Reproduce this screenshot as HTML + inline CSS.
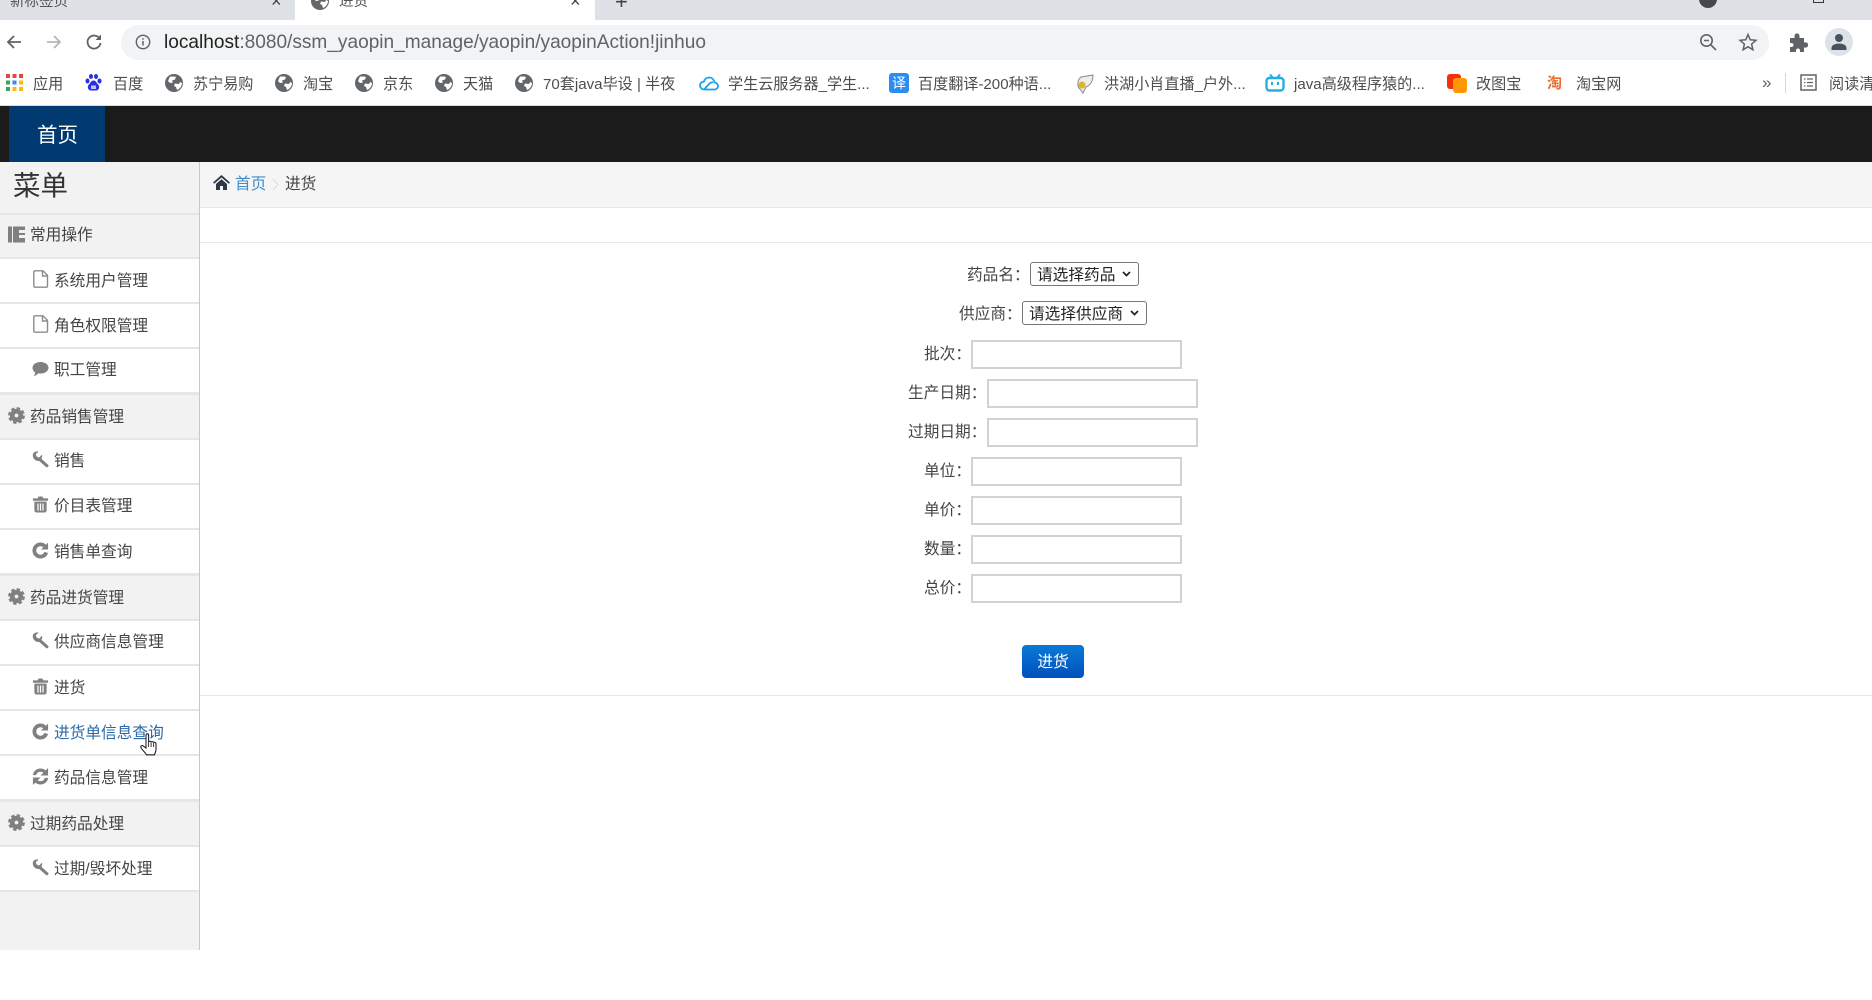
<!DOCTYPE html>
<html lang="zh-CN"><head><meta charset="utf-8"><title>进货</title>
<style>
html,body{margin:0;padding:0;width:1872px;height:1000px;overflow:hidden;background:#fff}
body{position:relative;font-family:"Liberation Sans","Noto Sans CJK SC",sans-serif;color:#444;font-size:15.7px}
.a{position:absolute}
.t{position:absolute;line-height:24px;height:24px;white-space:nowrap;margin-top:1px}
.bm{font-size:15.1px;color:#4b4d50;top:72px}
.sec{left:30px}
.it{left:54px}
.lb{color:#444}
svg{position:absolute;overflow:visible}
input{position:absolute;box-sizing:border-box;width:211px;height:29px;border:2px solid #d2d2d2;background:#fff;margin:0;padding:0}
select{position:absolute;box-sizing:border-box;height:24px;margin:0;padding:2px 0 0 6px;-webkit-appearance:none;appearance:none;font:15.7px "Liberation Sans","Noto Sans CJK SC",sans-serif;color:#222;background:#fff;border:1px solid #767676;border-radius:3px}
.ln{position:absolute;left:0;width:199px;height:2px;background:#e6e6e6}
</style></head><body>
<svg width="0" height="0" style="position:absolute">
<defs>
<symbol id="globe" viewBox="0 0 18 18"><circle cx="9" cy="9" r="9" fill="#63666a"/><path d="M5 2.500C7 3 9 2 11 3l-1 2.500-3 1 1 2-3 .5-2-2zM10 9.500l4 .5 1-2 2 1c0 3-2 6-5 7l-1-3-2-1z" fill="#fff"/></symbol>
<symbol id="gear" viewBox="0 0 18 18"><circle cx="9" cy="9" r="4.500" fill="none" stroke="#808080" stroke-width="5"/><circle cx="9" cy="9" r="7.400" fill="none" stroke="#808080" stroke-width="3" stroke-dasharray="3.500 2.300"/></symbol>
<symbol id="wrench" viewBox="0 0 18 18"><path d="M.8 4.500C.8 1.500 4 -.2 7 .5L4 3.500 5 6l2.500 1L10.500 4c.6 1.500.3 3-.6 4.200l7.300 6.500c1.100 1.100-1 3.400-2.300 2.300L7.500 10.500C4.500 11 .8 8.500.8 4.500z" fill="#808080"/></symbol>
<symbol id="trash" viewBox="0 0 18 18"><path d="M6 2.500 7 .5h4l1 2h5v2.500H1V2.500zM2.500 6h13v9c0 1.500-1 2.500-2.500 2.500H5c-1.500 0-2.500-1-2.500-2.500zM5.700 8v7.500h1.300V8zM8.350 8v7.500h1.300V8zM11 8v7.500h1.300V8z" fill="#808080" fill-rule="evenodd"/></symbol>
<symbol id="redo" viewBox="0 0 18 18"><path d="M9 .5c2.300 0 4.400.9 5.900 2.400L17 .5V8H9.500l2.400-2.400C11.200 4.900 10.100 4.500 9 4.500a4.500 4.500 0 1 0 4.200 6l3.800 1.200C15.900 15.300 12.800 17.500 9 17.500 4.300 17.500.5 13.700.5 9S4.300.5 9 .5z" fill="#808080"/></symbol>
<symbol id="sync" viewBox="0 0 18 18"><path d="M.8 7.500C1.800 3 5 .5 9 .5c2.200 0 4 .8 5.400 2L17 0V8H9l3-3C11.300 4.400 10.300 4 9 4 6.800 4 5.200 5.200 4.400 7.500zM17.200 10.500C16.200 15 13 17.500 9 17.500c-2.200 0-4-.8-5.400-2L1 18v-8h8l-3 3c.7.600 1.700 1 3 1 2.200 0 3.800-1.200 4.600-3.500z" fill="#808080"/></symbol>
<symbol id="file" viewBox="0 0 16 18"><path d="M2 .8h8l4.500 4.500V16c0 .7-.5 1.200-1.200 1.200H2c-.7 0-1.200-.5-1.200-1.200V2C.8 1.300 1.300.8 2 .8zM9.500 1v5h5" fill="none" stroke="#8c8c8c" stroke-width="1.400"/></symbol>
</defs></svg>

<!-- tab strip -->
<div class="a" style="left:0;top:0;width:1872px;height:20px;background:#dee1e6"></div>
<div class="a" style="left:295px;top:-10px;width:300px;height:30px;background:#fff;border-radius:10px 10px 0 0"></div>
<div class="a" style="left:0;top:0;width:1872px;height:20px;overflow:hidden">
<div class="t" style="left:10px;top:-11px;font-size:14.500px;color:#555">新标签页</div>
<div class="t" style="left:339px;top:-11px;font-size:14.500px;color:#555">进货</div>
<div class="t" style="left:271px;top:-12px;font-size:18px;color:#444">×</div>
<div class="t" style="left:570px;top:-12px;font-size:18px;color:#444">×</div>
<div class="t" style="left:615px;top:-11px;font-size:22px;color:#444">+</div>
<svg style="left:311px;top:-8px" width="18" height="18"><use href="#globe"/></svg>
<div class="a" style="left:1699px;top:-10px;width:18px;height:18px;border-radius:50%;background:#45484c"></div>
<div class="a" style="left:1813px;top:-8px;width:9px;height:9px;border:1.500px solid #333"></div>
</div>

<!-- toolbar -->
<svg style="left:5px;top:33px" width="18" height="18" viewBox="0 0 18 18"><path d="M16 9H3M9 3 3 9l6 6" fill="none" stroke="#5f6368" stroke-width="1.800"/></svg>
<svg style="left:45px;top:33px" width="18" height="18" viewBox="0 0 18 18"><path d="M2 9h13M9 3l6 6-6 6" fill="none" stroke="#b4b7ba" stroke-width="1.800"/></svg>
<svg style="left:85px;top:33px" width="18" height="18" viewBox="0 0 18 18"><path d="M14.800 6A6.500 6.500 0 1 0 15.500 10" fill="none" stroke="#5f6368" stroke-width="1.800"/><path d="M16 1.500V7h-5.500z" fill="#5f6368"/></svg>
<div class="a" style="left:121px;top:25px;width:1648px;height:35px;background:#f1f3f4;border-radius:18px"></div>
<svg style="left:135px;top:34px" width="16" height="16" viewBox="0 0 16 16"><circle cx="8" cy="8" r="6.700" fill="none" stroke="#5f6368" stroke-width="1.400"/><path d="M8 7v4.500M8 4.300v1.500" stroke="#5f6368" stroke-width="1.500"/></svg>
<div class="t" style="left:164px;top:30px;font-size:19.080px;color:#222">localhost<span style="color:#5f6368">:8080/ssm_yaopin_manage/yaopin/yaopinAction!jinhuo</span></div>
<svg style="left:1699px;top:33px" width="18" height="18" viewBox="0 0 18 18"><circle cx="7.500" cy="7.500" r="5.700" fill="none" stroke="#5f6368" stroke-width="1.600"/><path d="M5 7.500h5M12 12l5 5" stroke="#5f6368" stroke-width="1.600"/></svg>
<svg style="left:1739px;top:33px" width="18" height="18" viewBox="0 0 18 18"><path d="M9 1.500 11.200 6.800 17 7.300 12.600 11.100 13.900 16.700 9 13.800 4.100 16.700 5.400 11.100 1 7.300 6.800 6.800z" fill="none" stroke="#5f6368" stroke-width="1.500"/></svg>
<svg style="left:1789px;top:33px" width="19" height="19" viewBox="0 0 19 19"><path d="M1 5h4.500C5.200 1 6.500.5 8 .5s2.800.5 2.500 4.500H15v4.500c3.500-.5 4 1 4 2.500s-.5 3-4 2.500V19h-4c.3-2.500-.5-3.500-2-3.500S6.700 16.500 7 19H1v-5c2.500.3 3.500-.5 3.500-2S3.500 9.700 1 10z" fill="#5f6368"/></svg>
<div class="a" style="left:1825px;top:28px;width:28px;height:28px;border-radius:50%;background:#dee1e6"></div>
<svg style="left:1830px;top:33px" width="18" height="18" viewBox="0 0 18 18"><circle cx="9" cy="5" r="4" fill="#45525f"/><path d="M1.500 17v-2c0-3 4-4.500 7.500-4.500s7.500 1.500 7.500 4.500v2z" fill="#45525f"/></svg>

<!-- bookmarks -->
<svg style="left:6px;top:74px" width="17" height="17" viewBox="0 0 17 17"><g><rect x="0" y="0" width="4" height="4" fill="#e8453c"/><rect x="6.500" y="0" width="4" height="4" fill="#e8453c"/><rect x="13" y="0" width="4" height="4" fill="#e8453c"/><rect x="0" y="6.500" width="4" height="4" fill="#34a853"/><rect x="6.500" y="6.500" width="4" height="4" fill="#4285f4"/><rect x="13" y="6.500" width="4" height="4" fill="#fbbc05"/><rect x="0" y="13" width="4" height="4" fill="#34a853"/><rect x="6.500" y="13" width="4" height="4" fill="#fbbc05"/><rect x="13" y="13" width="4" height="4" fill="#fbbc05"/></g></svg>
<div class="t bm" style="left:33px">应用</div>
<svg style="left:85px;top:74px" width="17" height="17" viewBox="0 0 17 17"><g fill="#2932e1"><ellipse cx="2.500" cy="7" rx="2" ry="2.500"/><ellipse cx="6" cy="2.500" rx="2" ry="2.500"/><ellipse cx="11" cy="2.500" rx="2" ry="2.500"/><ellipse cx="14.500" cy="7" rx="2" ry="2.500"/><path d="M8.500 6.500c2.500 0 3 2.500 5 4.500 1.500 2 .5 5.500-2.500 5.500H6c-3 0-4-3.500-2.500-5.500 2-2 2.500-4.500 5-4.500z"/></g><path d="M6 11.500h5v3.500H6z" fill="#fff" opacity=".7"/></svg>
<div class="t bm" style="left:113px">百度</div>
<svg style="left:165px;top:74px" width="18" height="18"><use href="#globe"/></svg>
<div class="t bm" style="left:193px">苏宁易购</div>
<svg style="left:275px;top:74px" width="18" height="18"><use href="#globe"/></svg>
<div class="t bm" style="left:303px">淘宝</div>
<svg style="left:355px;top:74px" width="18" height="18"><use href="#globe"/></svg>
<div class="t bm" style="left:383px">京东</div>
<svg style="left:435px;top:74px" width="18" height="18"><use href="#globe"/></svg>
<div class="t bm" style="left:463px">天猫</div>
<svg style="left:515px;top:74px" width="18" height="18"><use href="#globe"/></svg>
<div class="t bm" style="left:543px">70套java毕设 | 半夜</div>
<svg style="left:699px;top:74px" width="20" height="18" viewBox="0 0 20 18"><path d="M5 15.500h10.500a3.500 3.500 0 0 0 0-7c-.5-3-2.500-5-5.500-5-2.500 0-4.500 1.500-5 4C2.500 8 1 9.500 1 11.500s1.800 4 4 4zM5 15.500 11 9l3-1" fill="none" stroke="#1ba3e8" stroke-width="1.800"/></svg>
<div class="t bm" style="left:728px">学生云服务器_学生...</div>
<div class="a" style="left:889px;top:73px;width:20px;height:20px;border-radius:3px;background:#2d8cf0;color:#fff;font-size:14px;line-height:20px;text-align:center">译</div>
<div class="t bm" style="left:918px">百度翻译-200种语...</div>
<svg style="left:1075px;top:74px" width="19" height="20" viewBox="0 0 19 20"><path d="M6 3 18 1c0 5-2 10-7 12l-3 6-3-4C2 13 2 6 6 3z" fill="#eee" stroke="#888" stroke-width="1"/><circle cx="7" cy="11" r="3.500" fill="#e0b030"/></svg>
<div class="t bm" style="left:1104px">洪湖小肖直播_户外...</div>
<svg style="left:1265px;top:74px" width="20" height="18" viewBox="0 0 20 18"><rect x="1.500" y="4" width="17" height="12.500" rx="3" fill="none" stroke="#23ade5" stroke-width="2.400"/><path d="M5 .5 8 4M15 .5 12 4" stroke="#23ade5" stroke-width="2"/><rect x="6" y="8" width="2" height="3" fill="#23ade5"/><rect x="12" y="8" width="2" height="3" fill="#23ade5"/></svg>
<div class="t bm" style="left:1294px">java高级程序猿的...</div>
<div class="a" style="left:1447px;top:74px;width:14px;height:15px;background:#f5300d;border-radius:3px"></div>
<div class="a" style="left:1453px;top:78px;width:14px;height:15px;background:#ff9800;border-radius:3px"></div>
<div class="t bm" style="left:1476px">改图宝</div>
<div class="t" style="left:1547px;top:71px;font-size:15px;color:#ef6b2a;font-weight:bold">淘</div>
<div class="t bm" style="left:1576px">淘宝网</div>
<div class="t" style="left:1762px;top:70px;font-size:17px;color:#5f6368">»</div>
<div class="a" style="left:1785px;top:73px;width:1px;height:20px;background:#d5d7da"></div>
<svg style="left:1800px;top:74px" width="17" height="17" viewBox="0 0 17 17"><rect x="1" y="1" width="15" height="15" fill="none" stroke="#5f6368" stroke-width="1.500"/><path d="M4 5h1.500M7 5h6M4 8.500h1.500M7 8.500h6M4 12h1.500M7 12h6" stroke="#5f6368" stroke-width="1.300"/></svg>
<div class="t bm" style="left:1829px">阅读清单</div>
<div class="a" style="left:0;top:105px;width:1872px;height:1px;background:#d8dadd"></div>

<!-- header -->
<div class="a" style="left:0;top:106px;width:1872px;height:56px;background:#1b1b1b"></div>
<div class="a" style="left:9px;top:106px;width:96px;height:56px;background:#003a70"></div>
<div class="t" style="left:37px;top:123px;font-size:20.500px;color:#fff">首页</div>

<!-- sidebar -->
<div class="a" style="left:0;top:162px;width:199px;height:788px;background:#f2f2f2;border-right:1px solid #c8c8c8"></div>
<div class="a" style="left:0;top:259px;width:199px;height:134px;background:#fff"></div>
<div class="a" style="left:0;top:440px;width:199px;height:134px;background:#fff"></div>
<div class="a" style="left:0;top:621px;width:199px;height:179px;background:#fff"></div>
<div class="a" style="left:0;top:847px;width:199px;height:44px;background:#fff"></div>
<div class="ln" style="top:213px"></div><div class="ln" style="top:257px"></div><div class="ln" style="top:302px"></div><div class="ln" style="top:347px"></div><div class="ln" style="top:392px;height:3px"></div><div class="ln" style="top:438px"></div><div class="ln" style="top:483px"></div><div class="ln" style="top:528px"></div><div class="ln" style="top:573px;height:3px"></div><div class="ln" style="top:619px"></div><div class="ln" style="top:664px"></div><div class="ln" style="top:709px"></div><div class="ln" style="top:754px"></div><div class="ln" style="top:799px;height:3px"></div><div class="ln" style="top:845px"></div><div class="ln" style="top:890px"></div>

<div class="t" style="left:13px;top:173px;font-size:27.500px;color:#333">菜单</div>

<svg style="left:8px;top:226px" width="17" height="17" viewBox="0 0 17 17"><path d="M0 .5h4v16H0zM5 .5h12v16H5z" fill="#808080"/><path d="M11 4h6v3h-6zM11 9h6v3h-6z" fill="#f2f2f2"/></svg>
<div class="t sec" style="top:223px">常用操作</div>
<svg style="left:33px;top:270px" width="16" height="18"><use href="#file"/></svg>
<div class="t it" style="top:269px">系统用户管理</div>
<svg style="left:33px;top:315px" width="16" height="18"><use href="#file"/></svg>
<div class="t it" style="top:314px">角色权限管理</div>
<svg style="left:32px;top:361px" width="17" height="16" viewBox="0 0 17 16"><path d="M8.500 1C13 1 16.500 3.500 16.500 6.800S13 12.600 8.500 12.600c-.8 0-1.600-.1-2.300-.2C5 13.700 3.500 14.800 1.500 15.200 2.500 14 3.100 12.900 3.200 11.600 1.500 10.600.5 8.800.5 6.800.5 3.500 4 1 8.500 1z" fill="#808080"/></svg>
<div class="t it" style="top:358px">职工管理</div>

<svg style="left:8px;top:407px" width="17" height="17"><use href="#gear"/></svg>
<div class="t sec" style="top:405px">药品销售管理</div>
<svg style="left:32px;top:451px" width="17" height="17"><use href="#wrench"/></svg>
<div class="t it" style="top:449px">销售</div>
<svg style="left:32px;top:496px" width="17" height="17"><use href="#trash"/></svg>
<div class="t it" style="top:494px">价目表管理</div>
<svg style="left:32px;top:542px" width="17" height="17"><use href="#redo"/></svg>
<div class="t it" style="top:540px">销售单查询</div>

<svg style="left:8px;top:588px" width="17" height="17"><use href="#gear"/></svg>
<div class="t sec" style="top:586px">药品进货管理</div>
<svg style="left:32px;top:632px" width="17" height="17"><use href="#wrench"/></svg>
<div class="t it" style="top:630px">供应商信息管理</div>
<svg style="left:32px;top:678px" width="17" height="17"><use href="#trash"/></svg>
<div class="t it" style="top:676px">进货</div>
<svg style="left:32px;top:723px" width="17" height="17"><use href="#redo"/></svg>
<div class="t it" style="top:721px;color:#2a6aa8">进货单信息查询</div>
<svg style="left:32px;top:768px" width="17" height="17"><use href="#sync"/></svg>
<div class="t it" style="top:766px">药品信息管理</div>

<svg style="left:8px;top:814px" width="17" height="17"><use href="#gear"/></svg>
<div class="t sec" style="top:812px">过期药品处理</div>
<svg style="left:32px;top:859px" width="17" height="17"><use href="#wrench"/></svg>
<div class="t it" style="top:857px">过期/毁坏处理</div>

<!-- cursor -->
<svg style="left:140px;top:733px" width="20" height="25" viewBox="0 0 20 25"><path d="M6 2c0-1.600 2.600-1.600 2.600 0v7c0-1 2.500-1 2.500.3 0-1 2.500-1 2.500.5 0-.8 2.400-.6 2.400 1v6c0 2-1 3-1.500 5H6.500C5.500 19.500 1 16 .8 14c-.2-1.600 1.600-1.800 2.700-.8L6 15z" fill="#fff" stroke="#222" stroke-width="1.100"/><path d="M8.600 9v5M11.100 9.500v4.500M13.600 10v4" stroke="#222" stroke-width=".9"/></svg>

<!-- breadcrumb -->
<div class="a" style="left:200px;top:162px;width:1672px;height:45px;background:#f5f5f5"></div>
<div class="a" style="left:200px;top:207px;width:1672px;height:1px;background:#e8e8e8"></div>
<div class="a" style="left:200px;top:242px;width:1672px;height:1px;background:#e8e8e8"></div>
<div class="a" style="left:200px;top:695px;width:1672px;height:1px;background:#e8e8e8"></div>
<svg style="left:213px;top:175px" width="17" height="15" viewBox="0 0 17 15"><path d="M8.500 0 17 7.500 15.800 8.700 8.500 2.500 1.200 8.700 0 7.500zM3 9l5.500-4.700L14 9v6h-4v-4H7v4H3z" fill="#2d3a45"/></svg>
<div class="t" style="left:235px;top:172px;color:#428bca">首页</div>
<svg style="left:272px;top:178px" width="7" height="13" viewBox="0 0 7 13"><path d="M1 1l5 5.500L1 12" fill="none" stroke="#ddd" stroke-width="1"/></svg>
<div class="t" style="left:285px;top:172px">进货</div>

<!-- form -->
<div class="t lb" style="left:967px;top:263px">药品名：</div>
<select style="left:1030px;top:262px;width:109px"><option>请选择药品</option></select>
<svg style="left:1122px;top:271px" width="9" height="6" viewBox="0 0 9 6"><path d="M1 1l3.500 3.500L8 1" fill="none" stroke="#222" stroke-width="1.700"/></svg>
<div class="t lb" style="left:959px;top:302px">供应商：</div>
<select style="left:1022px;top:301px;width:125px"><option>请选择供应商</option></select>
<svg style="left:1130px;top:310px" width="9" height="6" viewBox="0 0 9 6"><path d="M1 1l3.500 3.500L8 1" fill="none" stroke="#222" stroke-width="1.700"/></svg>
<div class="t lb" style="left:924px;top:342px">批次：</div>
<input type="text" style="left:971px;top:340px">
<div class="t lb" style="left:908px;top:381px">生产日期：</div>
<input type="text" style="left:987px;top:379px">
<div class="t lb" style="left:908px;top:420px">过期日期：</div>
<input type="text" style="left:987px;top:418px">
<div class="t lb" style="left:924px;top:459px">单位：</div>
<input type="text" style="left:971px;top:457px">
<div class="t lb" style="left:924px;top:498px">单价：</div>
<input type="text" style="left:971px;top:496px">
<div class="t lb" style="left:924px;top:537px">数量：</div>
<input type="text" style="left:971px;top:535px">
<div class="t lb" style="left:924px;top:576px">总价：</div>
<input type="text" style="left:971px;top:574px">
<div class="a" style="left:1022px;top:645px;width:62px;height:33px;border-radius:4px;background:linear-gradient(#0a7ad6,#0050bd);color:#fff;font-size:15.700px;line-height:35px;text-align:center">进货</div>
</body></html>
